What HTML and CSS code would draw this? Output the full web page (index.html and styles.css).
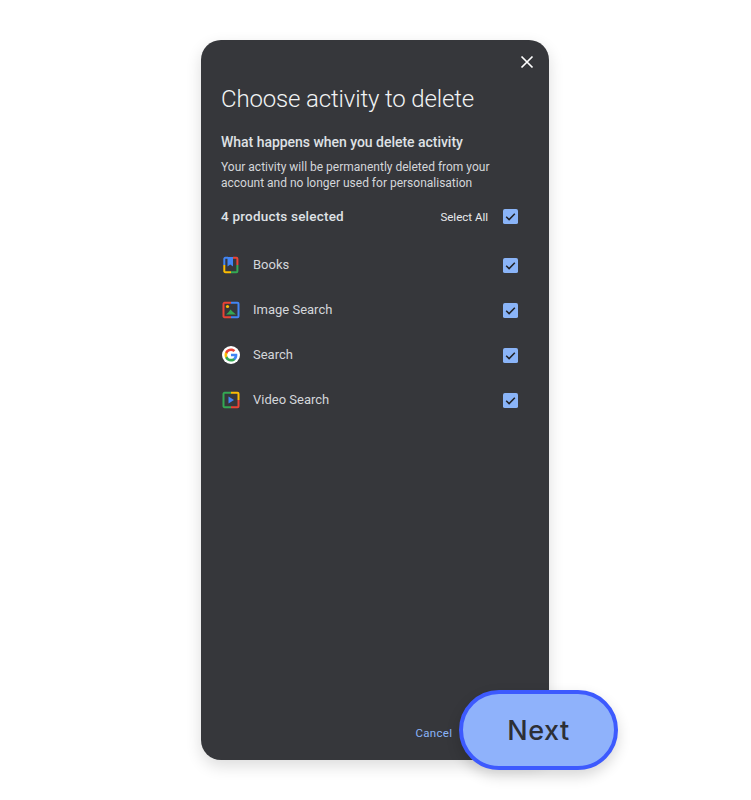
FILE: index.html
```html
<!DOCTYPE html>
<html lang="en">
<head>
<meta charset="utf-8">
<title>Choose activity to delete</title>
<link rel="stylesheet" href="styles.css">
</head>
<body>
<main class="stage">
  <section class="card">
    <div class="close-row">
      <svg class="close" viewBox="0 0 14 14" aria-label="Close"><path d="M1.5 1.5 12.5 12.5M12.5 1.5 1.5 12.5"/></svg>
    </div>
    <h1 class="title">Choose activity to delete</h1>
    <h2 class="subtitle">What happens when you delete activity</h2>
    <p class="desc">Your activity will be permanently deleted from your account and no longer used for personalisation</p>
    <div class="summary">
      <span class="count">4 products selected</span>
      <span class="select-all">Select All</span>
      <svg class="check" viewBox="0 0 16 16"><rect width="16" height="16" rx="2"/><path d="M3.400 8.300 6.500 11.300 12.600 5"/></svg>
    </div>
    <ul class="list">
      <li class="row">
        <svg class="icon" viewBox="0 0 18 18" fill="none">
          <path d="M6 1.800H3.300a1 1 0 0 0-1 1V9" stroke="#4285f4" stroke-width="2"/>
          <path d="M2.300 9v6.200a1 1 0 0 0 1 1H9" stroke="#fbbc04" stroke-width="2"/>
          <path d="M9 16.200h5.400a1 1 0 0 0 1-1V9" stroke="#34a853" stroke-width="2"/>
          <path d="M15.400 9V2.800a1 1 0 0 0-1-1H11" stroke="#ea4335" stroke-width="2"/>
          <path d="M5.500 1h5.500v9.500L8.250 8.500 5.500 10.500z" fill="#4285f4"/>
        </svg>
        <span class="label">Books</span>
        <svg class="check" viewBox="0 0 16 16"><rect width="16" height="16" rx="2"/><path d="M3.400 8.300 6.500 11.300 12.600 5"/></svg>
      </li>
      <li class="row">
        <svg class="icon" viewBox="0 0 18 18" fill="none">
          <path d="M9 1.800H2.500a1 1 0 0 0-1 1v12.400a1 1 0 0 0 1 1H9" stroke="#ea4335" stroke-width="2"/>
          <path d="M9 1.800h6.500a1 1 0 0 1 1 1v12.400a1 1 0 0 1-1 1H9" stroke="#4285f4" stroke-width="2"/>
          <circle cx="5.500" cy="5.500" r="1.600" fill="#fbbc04"/>
          <path d="M4 13.500 6.500 11.200 8.500 8.500 11 11l3 2.500z" fill="#34a853"/>
        </svg>
        <span class="label">Image Search</span>
        <svg class="check" viewBox="0 0 16 16"><rect width="16" height="16" rx="2"/><path d="M3.400 8.300 6.500 11.300 12.600 5"/></svg>
      </li>
      <li class="row">
        <svg class="icon" viewBox="0 0 18 18">
          <circle cx="9" cy="9" r="9" fill="#fff"/>
          <g transform="translate(2.500 2.500) scale(.27)">
            <path fill="#4285f4" d="M47.500 24.600c0-1.700-.1-3.300-.4-4.800H24v9.100h13.200c-.6 3-2.300 5.600-4.900 7.300v6.100h7.900c4.600-4.300 7.300-10.500 7.300-17.700z"/>
            <path fill="#34a853" d="M24 48c6.500 0 11.900-2.100 15.900-5.800L32 36.100c-2.200 1.500-5 2.300-8 2.300-6.200 0-11.500-4.200-13.400-9.900H2.500v6.300C6.400 42.600 14.600 48 24 48z"/>
            <path fill="#fbbc04" d="M10.600 28.500c-.5-1.400-.8-3-.8-4.500s.3-3.100.8-4.500v-6.300H2.500C.9 16.400 0 20.100 0 24s.9 7.600 2.500 10.800z"/>
            <path fill="#ea4335" d="M24 9.500c3.500 0 6.700 1.200 9.200 3.600l6.900-6.900C35.900 2.400 30.500 0 24 0 14.600 0 6.400 5.400 2.500 13.200l8.100 6.300C12.500 13.700 17.800 9.500 24 9.500z"/>
          </g>
        </svg>
        <span class="label">Search</span>
        <svg class="check" viewBox="0 0 16 16"><rect width="16" height="16" rx="2"/><path d="M3.400 8.300 6.500 11.300 12.600 5"/></svg>
      </li>
      <li class="row">
        <svg class="icon" viewBox="0 0 18 18" fill="none">
          <path d="M9 1.800H2.500a1 1 0 0 0-1 1v12.400a1 1 0 0 0 1 1H9" stroke="#34a853" stroke-width="2"/>
          <path d="M9 1.800h6.500a1 1 0 0 1 1 1V9" stroke="#fbbc04" stroke-width="2"/>
          <path d="M16.500 9v6.200a1 1 0 0 1-1 1H9" stroke="#ea4335" stroke-width="2"/>
          <path d="M6.500 5.500v7L12 9z" fill="#4285f4"/>
        </svg>
        <span class="label">Video Search</span>
        <svg class="check" viewBox="0 0 16 16"><rect width="16" height="16" rx="2"/><path d="M3.400 8.300 6.500 11.300 12.600 5"/></svg>
      </li>
    </ul>
    <div class="footer"><a class="cancel">Cancel</a></div>
    <button class="next" type="button">Next</button>
  </section>
</main>
</body>
</html>
```

FILE: styles.css
```css
* { box-sizing: border-box; }
html, body { margin: 0; padding: 0; background: #fff; }
body { font-family: Roboto, "Noto Sans", sans-serif; }
.stage { display: flex; justify-content: center; height: 800px; padding: 40px 1px 0 0; }
.card {
  position: relative;
  display: flex;
  flex-direction: column;
  width: 348px;
  height: 720px;
  padding: 0 31px 0 20px;
  background: #36373b;
  border-radius: 20px;
  box-shadow: 0 6px 16px rgba(0, 0, 0, .14);
  color: #e8eaed;
}
.close-row { display: flex; justify-content: flex-end; height: 44px; padding: 15px 0 0 0; margin-right: -16px; }
.close { width: 14px; height: 14px; }
.close path { stroke: #fff; stroke-width: 1.700; fill: none; }
.title { margin: 0; font-size: 24px; line-height: 30px; font-weight: 300; letter-spacing: -.15px; color: #f1f3f4; }
.subtitle { margin: 18px 0 0; font-size: 14px; line-height: 20px; font-weight: 500; letter-spacing: -.03px; color: #dfe1e5; }
.desc { margin: 7px 0 0; font-size: 12px; line-height: 16px; color: #d4d6da; }
.summary { display: flex; align-items: center; margin-top: 16px; height: 18px; }
.count { flex: 1; font-size: 13.500px; font-weight: 500; letter-spacing: .2px; color: #dfe1e5; }
.select-all { margin-right: 15px; font-size: 11.500px; line-height: 18px; padding-top: 1px; color: #e8eaed; }
.check { width: 15px; height: 15px; flex: none; }
.check rect { fill: #8ab4f8; }
.check path { fill: none; stroke: #202124; stroke-width: 1.600; }
.list { list-style: none; margin: 17px 0 0; padding: 0; display: flex; flex-direction: column; }
.row { display: flex; align-items: center; height: 45px; }
.row .check { margin-top: 1px; }
.icon { width: 18px; height: 18px; flex: none; margin: 0 13.500px 0 .5px; }
.label { flex: 1; font-size: 13px; color: #d4d6da; }
.footer { margin-top: auto; height: 34px; }
.cancel { display: block; margin-left: 194.500px; font-size: 11.500px; line-height: 14px; letter-spacing: .3px; color: #8ab4f8; }
.next {
  position: absolute;
  left: 258px;
  top: 650px;
  width: 159px;
  height: 80px;
  border: 4px solid #3d5afe;
  border-radius: 40px;
  background: #8fb2fb;
  box-shadow: 0 6px 14px rgba(0, 0, 0, .16);
  font-family: Inter, sans-serif;
  font-size: 27px;
  font-weight: 500;
  letter-spacing: .5px;
  color: #2d2f36;
}
```
